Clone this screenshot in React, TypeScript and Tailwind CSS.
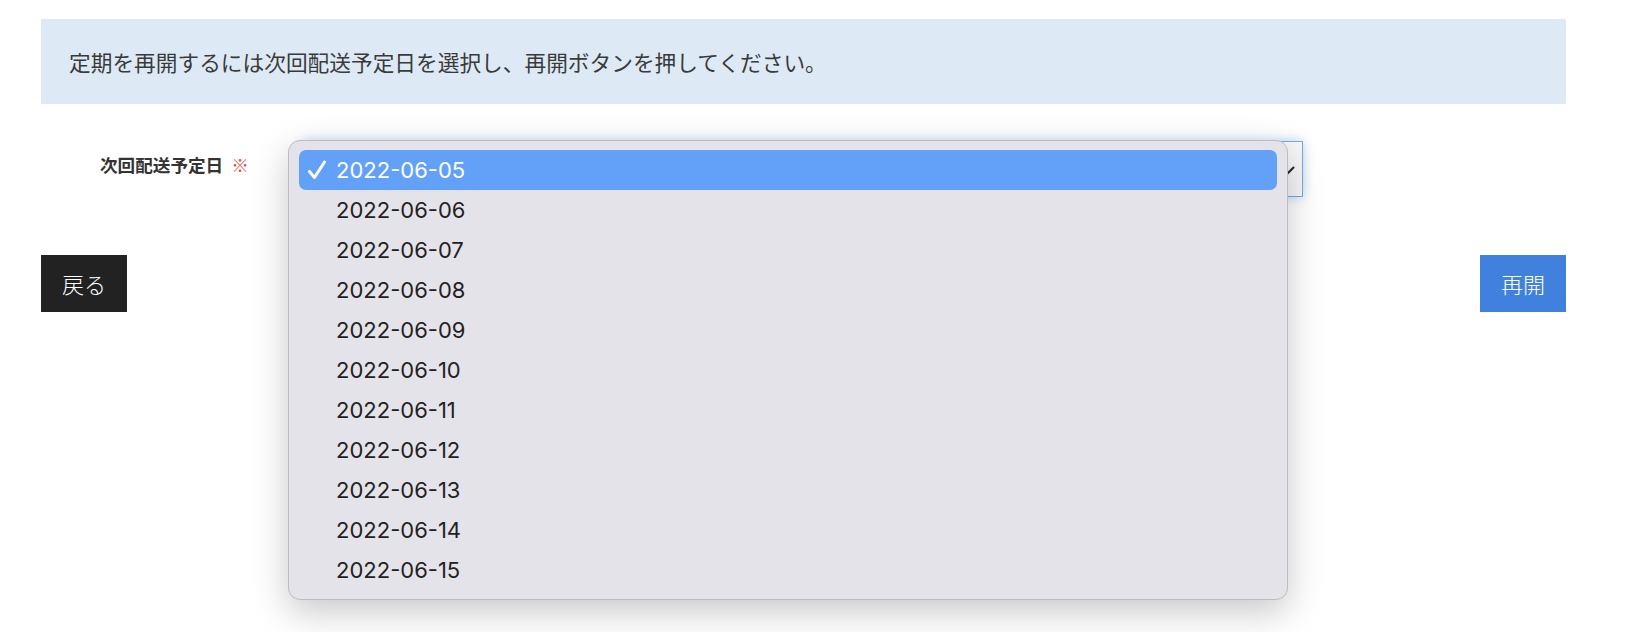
import React from 'react'

const DATES = [
    '2022-06-05',
    '2022-06-06',
    '2022-06-07',
    '2022-06-08',
    '2022-06-09',
    '2022-06-10',
    '2022-06-11',
    '2022-06-12',
    '2022-06-13',
    '2022-06-14',
    '2022-06-15',
]

const jp = "font-['Noto_Sans_CJK_JP',sans-serif]"

const Check: React.FC = () => (
    <svg width="20" height="24" viewBox="0 0 20 24" fill="none" className="shrink-0">
        <path d="M2.5 13.5 L7.5 19.5 L17.5 4" stroke="white" strokeWidth="3" strokeLinecap="round" strokeLinejoin="round" />
    </svg>
)

export default function App() {
    const selected = DATES[0]

    return (
        <div className={`relative w-[1634px] h-[632px] bg-white text-[#333] ${jp} overflow-hidden`}>
            <div className="ml-[41px] w-[1525px] pt-[19px]">
                {/* Notice */}
                <div className="h-[85px] flex items-center px-[28px] bg-[#ddeaf6]">
                    <p className="text-[21.7px] text-[#3a3a3a] leading-none">
                        定期を再開するには次回配送予定日を選択し、再開ボタンを押してください。
                    </p>
                </div>

                {/* Form row */}
                <div className="mt-[37px] flex items-center">
                    <div className="w-[262px] pl-[59px] pb-[8px] flex items-center gap-[8px]">
                        <span className="text-[17.6px] font-bold text-[#333] leading-none">次回配送予定日</span>
                        <span className="text-[17.6px] text-[#d9534f] leading-none">※</span>
                    </div>
                    <div className="relative w-[1000px] h-[56px] border border-[#7aa8e0] bg-[#f7f7f7] shadow-[0_0_10px_rgba(102,160,230,0.45)]">
                        <svg width="16" height="10" viewBox="0 0 16 10" className="absolute right-[7px] top-[24px]">
                            <path d="M1.5 1.5 L8 8 L14.5 1.5" stroke="#222" strokeWidth="2" fill="none" strokeLinecap="round" />
                        </svg>
                    </div>
                </div>

                {/* Buttons */}
                <div className="mt-[58px] flex justify-between">
                    <button className="w-[86px] h-[57px] bg-[#222] text-white text-[22px] font-light">戻る</button>
                    <button className="w-[86px] h-[57px] bg-[#3f81dd] text-white text-[22px] font-light">再開</button>
                </div>
            </div>

            {/* Open select popup */}
            <div className="absolute left-[288px] top-[140px] w-[1000px] h-[460px] rounded-[12px] border border-[#bdbcc2] bg-[#e5e3ea] px-[10px] py-[9px] shadow-[0_12px_36px_rgba(0,0,0,0.22)] font-['Inter',sans-serif]">
                {DATES.map((d) => (
                    <div
                        key={d}
                        className={`h-[40px] flex items-center rounded-[7px] pl-[8px] gap-[9px] text-[22px] ${d === selected ? 'bg-[#63a0f8] text-white' : 'text-[#222]'}`}
                    >
                        {d === selected ? <Check /> : <span className="w-[20px] shrink-0" />}
                        <span className="leading-none">{d}</span>
                    </div>
                ))}
            </div>
        </div>
    )
}
